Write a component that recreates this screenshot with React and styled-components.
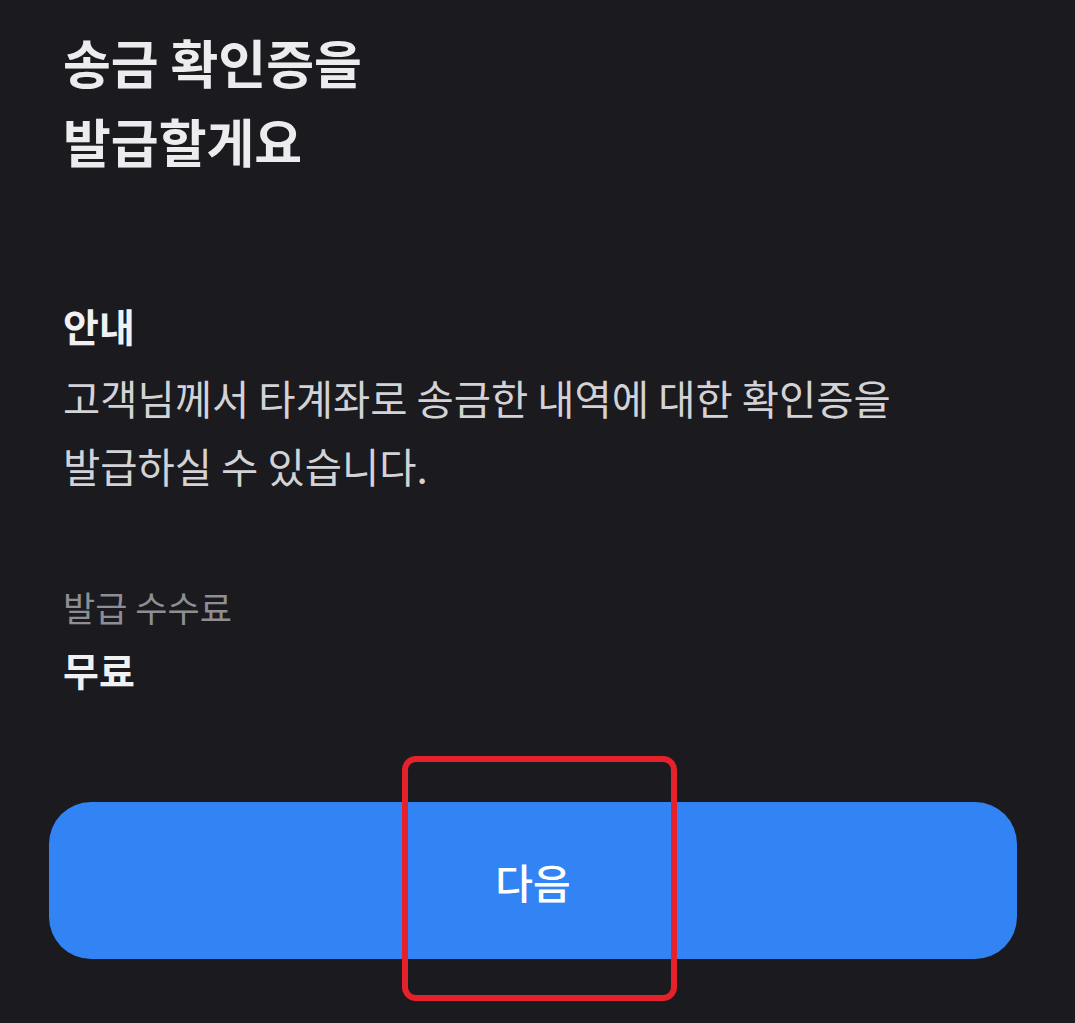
import styled, { createGlobalStyle } from 'styled-components'

const GlobalStyle = createGlobalStyle`
  html, body {
    margin: 0;
    padding: 0;
    background: #1b1a1f;
  }
  body {
    font-family: "Noto Sans CJK KR", "Noto Sans", sans-serif;
    color: #ececef;
  }
`

const Page = styled.div`
  position: relative;
  min-height: 1023px;
  background: #1b1a1f;
  padding-top: 22px;
  box-sizing: border-box;
`

const Content = styled.div`
  padding: 0 63px;
`

const Title = styled.h1`
  margin: 0;
  font-size: 52px;
  line-height: 79px;
  font-weight: 700;
  color: #ececef;
`

const SectionHead = styled.h2`
  margin: ${(p) => p.$top || 0}px 0 0;
  font-size: 39px;
  line-height: 50px;
  font-weight: 700;
  color: #f1f1f3;
`

const Body = styled.p`
  margin: 14px 0 0;
  font-size: 40.5px;
  line-height: 68px;
  font-weight: 400;
  color: #d3d3d7;
`

const Label = styled.div`
  margin-top: 85px;
  font-size: 35px;
  line-height: 44px;
  color: #8e8e94;
`

const Footer = styled.div`
  margin: 108px 58px 0 49px;
`

const NextButton = styled.button`
  width: 100%;
  height: 157px;
  border: none;
  border-radius: 42px;
  background: #3284f5;
  color: #ffffff;
  font-family: "Noto Sans CJK KR", "Noto Sans", sans-serif;
  font-size: 41px;
  font-weight: 500;
  padding: 0;
  cursor: pointer;
`

const Highlight = styled.div`
  position: absolute;
  left: 402px;
  top: 756px;
  width: 275px;
  height: 245px;
  box-sizing: border-box;
  border: 6px solid #e5222b;
  border-radius: 14px;
  pointer-events: none;
`

export default function App() {
  return (
    <>
      <GlobalStyle />
      <Page>
        <Content>
          <Title>
            송금 확인증을
            <br />
            발급할게요
          </Title>
          <SectionHead $top={120}>안내</SectionHead>
          <Body>
            고객님께서 타계좌로 송금한 내역에 대한 확인증을
            <br />
            발급하실 수 있습니다.
          </Body>
          <Label>발급 수수료</Label>
          <SectionHead $top={15}>무료</SectionHead>
        </Content>
        <Footer>
          <NextButton>다음</NextButton>
        </Footer>
        <Highlight />
      </Page>
    </>
  )
}
